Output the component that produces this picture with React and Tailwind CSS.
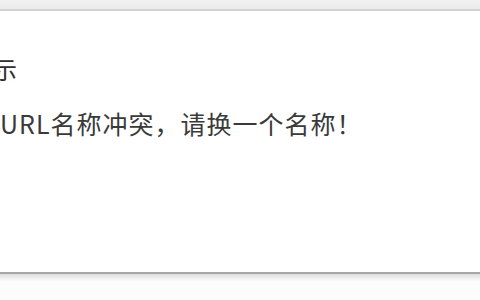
export default function App() {
  return (
    <div
      className="flex h-[300px] w-[480px] flex-col overflow-hidden bg-white"
      style={{ fontFamily: '"Noto Sans CJK SC", "Noto Sans", sans-serif' }}
    >
      <div className="h-[9px] bg-gradient-to-b from-[#f2f2f2] to-[#ebebeb]" />
      <div className="h-[2px] bg-[#d2d2d2]" />
      <div className="flex h-[261px] flex-col bg-white">
        <h2 className="-ml-[31px] mt-[43px] whitespace-nowrap text-[24px] font-normal leading-[30px] text-[#2e2e2e]">
          提示
        </h2>
        <p className="mt-[23px] whitespace-nowrap text-[25px] leading-[32px] tracking-[1px] text-[#3a3a3a]">
          URL名称冲突，请换一个名称！
        </p>
      </div>
      <div className="h-[2px] bg-[#a6a6a6]" />
      <div className="h-[7px] bg-gradient-to-b from-[#dcdcdc] to-[#fcfcfc]" />
      <div className="flex-1 bg-[#fcfcfc]" />
    </div>
  );
}
